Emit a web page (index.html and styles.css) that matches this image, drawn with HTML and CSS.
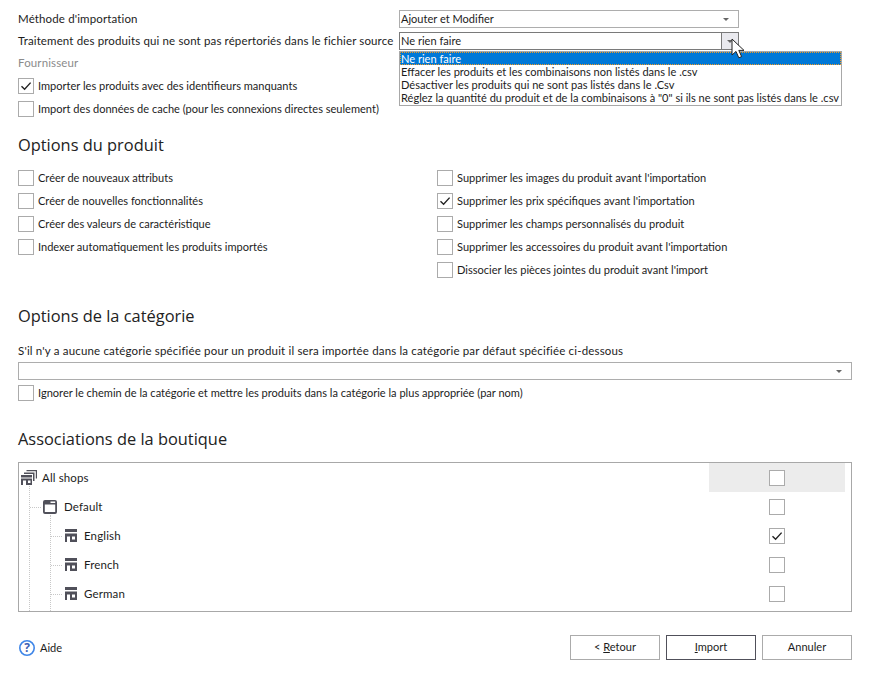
FILE: index.html
```html
<!DOCTYPE html>
<html lang="fr">
<head>
<meta charset="utf-8">
<title>Import</title>
<link rel="stylesheet" href="styles.css">
</head>
<body>
<svg class="defs" width="0" height="0" aria-hidden="true">
  <symbol id="check" viewBox="0 0 16 16"><path d="M3.500 8.200 6.600 11.200 12.600 4.600" fill="none" stroke="#222" stroke-width="1.400"/></symbol>
  <symbol id="shop" viewBox="0 0 12 13"><path fill="#50505a" fill-rule="evenodd" d="M0 0h12v3H0zM0 4.500h12V13H0zM2 7.500V13h3V7.500zM7 7.500V10.500h3V7.500z"/></symbol>
</svg>
<main class="page">
  <div class="form-row"><span class="label">Méthode d'importation</span>
    <div class="select select-top"><span>Ajouter et Modifier</span><i class="caret"></i></div></div>
  <div class="form-row row-second"><span class="label">Traitement des produits qui ne sont pas répertoriés dans le fichier source</span>
    <div class="select select-top select-open"><span>Ne rien faire</span><b class="drop-btn"><i class="caret"></i></b>
      <ul class="dropdown">
        <li class="selected">Ne rien faire</li>
        <li>Effacer les produits et les combinaisons non listés dans le .csv</li>
        <li>Désactiver les produits qui ne sont pas listés dans le .Csv</li>
        <li>Réglez la quantité du produit et de la combinaisons à "0" si ils ne sont pas listés dans le .csv</li>
      </ul>
      <svg class="cursor" width="14" height="22" viewBox="0 0 14 22"><path d="M1 1v16l4-3.600 2.800 6.400 2.800-1.200-2.800-6.200H13z" fill="#fff" stroke="#222" stroke-width="1"/></svg>
    </div></div>
  <div class="muted label">Fournisseur</div>
  <div class="checks top-checks">
    <label class="check"><span class="box"><svg><use href="#check"/></svg></span>Importer les produits avec des identifieurs manquants</label>
    <label class="check"><span class="box"></span>Import des données de cache (pour les connexions directes seulement)</label>
  </div>

  <h2 class="title title-product">Options du produit</h2>
  <div class="columns">
    <div class="checks col-left">
      <label class="check"><span class="box"></span>Créer de nouveaux attributs</label>
      <label class="check"><span class="box"></span>Créer de nouvelles fonctionnalités</label>
      <label class="check"><span class="box"></span>Créer des valeurs de caractéristique</label>
      <label class="check"><span class="box"></span>Indexer automatiquement les produits importés</label>
    </div>
    <div class="checks">
      <label class="check"><span class="box"></span>Supprimer les images du produit avant l'importation</label>
      <label class="check"><span class="box"><svg><use href="#check"/></svg></span>Supprimer les prix spécifiques avant l'importation</label>
      <label class="check"><span class="box"></span>Supprimer les champs personnalisés du produit</label>
      <label class="check"><span class="box"></span>Supprimer les accessoires du produit avant l'importation</label>
      <label class="check"><span class="box"></span>Dissocier les pièces jointes du produit avant l'import</label>
    </div>
  </div>

  <h2 class="title title-category">Options de la catégorie</h2>
  <p class="cat-label label">S'il n'y a aucune catégorie spécifiée pour un produit il sera importée dans la catégorie par défaut spécifiée ci-dessous</p>
  <div class="select select-wide"><span></span><i class="caret"></i></div>
  <label class="check check-cat"><span class="box"></span>Ignorer le chemin de la catégorie et mettre les produits dans la catégorie la plus appropriée (par nom)</label>

  <h2 class="title title-shop">Associations de la boutique</h2>
  <div class="tree">
    <div class="tree-row row-all">
      <svg class="tree-icon" width="16" height="15" viewBox="0 0 16 15"><path fill="#50505a" fill-rule="evenodd" d="M0 5h11v2.500H0zM0 8.500h11V15H0zM2 10.500V15H5v-4.500zM7 10.500V13h2.500v-2.500zM3 2.500h10.500V11H12V4H3zM5.500 0H16v8.500h-1.200V1.200H5.500z"/></svg>
      <span>All shops</span><span class="tree-cell cell-hl"><span class="box"></span></span>
    </div>
    <div class="tree-row lvl1">
      <svg class="tree-icon" width="14" height="14" viewBox="0 0 14 14"><path fill="#50505a" fill-rule="evenodd" d="M2 0h10a2 2 0 0 1 2 2v10a2 2 0 0 1-2 2H2a2 2 0 0 1-2-2V2a2 2 0 0 1 2-2zM1.800 4.500V12h10.400V4.500zM7.500 1.500v1.600h4.700V1.500z"/></svg>
      <span>Default</span><span class="tree-cell"><span class="box"></span></span>
    </div>
    <div class="tree-row lvl2">
      <svg class="tree-icon" width="12" height="13"><use href="#shop"/></svg>
      <span>English</span><span class="tree-cell"><span class="box"><svg><use href="#check"/></svg></span></span>
    </div>
    <div class="tree-row lvl2">
      <svg class="tree-icon" width="12" height="13"><use href="#shop"/></svg>
      <span>French</span><span class="tree-cell"><span class="box"></span></span>
    </div>
    <div class="tree-row lvl2">
      <svg class="tree-icon" width="12" height="13"><use href="#shop"/></svg>
      <span>German</span><span class="tree-cell"><span class="box"></span></span>
    </div>
  </div>

  <footer class="footer">
    <div class="help">
      <svg width="18" height="18" viewBox="0 0 18 18"><circle cx="9" cy="9" r="7.200" fill="none" stroke="#3f86e8" stroke-width="1.600"/><text x="9" y="13" text-anchor="middle" class="help-q">?</text></svg>
      <span>Aide</span>
    </div>
    <div class="buttons">
      <button class="btn">&lt; <u>R</u>etour</button>
      <button class="btn btn-default"><u>I</u>mport</button>
      <button class="btn">Annuler</button>
    </div>
  </footer>
</main>
</body>
</html>
```
FILE: styles.css
```css
* { box-sizing: border-box; }
html, body { margin: 0; padding: 0; background: #fff; }
body { width: 870px; height: 678px; overflow: hidden; font: 11.050px/16px Lato, "Open Sans", sans-serif; color: #1c1c1c; }
.defs { position: absolute; }
.page { padding: 10px 18px 0; }
.form-row { display: flex; align-items: center; justify-content: space-between; width: 721px; }
.row-second { margin-top: 4px; }
.label, .tree-row { font-size: 11.500px; white-space: nowrap; letter-spacing: 0.135px; }
.cat-label { letter-spacing: 0.170px; }
.select { display: flex; align-items: center; justify-content: space-between; height: 18px; border: 1px solid #adadad; padding: 0 6px 0 1px; background: #fff; }
.select-top { width: 340px; position: relative; }
.select-open { border-color: #7a7a7a; padding-right: 0; }
.select-wide { width: 834px; margin-top: 3px; }
.caret { width: 0; height: 0; border: 3.500px solid transparent; border-top: 3.500px solid #666; border-bottom: 0; display: block; margin-right: 3px; }
.drop-btn { width: 17px; height: 16px; background: #e9e9ee; border-left: 1px solid #7a7a7a; display: flex; align-items: center; justify-content: center; }
.drop-btn .caret { margin: 0; }
.dropdown { position: absolute; left: -1px; top: 18px; width: 443px; margin: 0; padding: 0 0 1px; list-style: none; background: #fff; border: 1px solid #a8a8a8; line-height: 13px; z-index: 2; }
.dropdown li { height: 13px; padding-left: 1px; white-space: nowrap; }
.dropdown .selected { background: #0078d7; color: #fff; outline: 1px dotted #f39a21; outline-offset: -1px; }
.cursor { position: absolute; left: 331px; top: 5px; z-index: 3; }
.muted { color: #8b8b8b; margin-top: 5px; height: 16px; }
.checks { display: flex; flex-direction: column; gap: 7px; }
.top-checks { margin-top: 7px; }
.check { display: flex; align-items: center; gap: 4px; height: 16px; white-space: nowrap; }
.box { flex: none; width: 16px; height: 16px; border: 1px solid #ababab; background: #fff; display: block; position: relative; }
.box svg { position: absolute; left: -1px; top: -1px; width: 16px; height: 16px; }
.title { font: 400 16.400px/22px "Open Sans", sans-serif; margin: 0; color: #222; }
.title-product { margin-top: 17px; }
.columns { display: flex; margin-top: 14px; height: 108px; }
.col-left { width: 419px; }
.title-category { margin-top: 27px; }
.cat-label { margin: 16px 0 0; height: 16px; }
.check-cat { margin-top: 5px; }
.title-shop { margin-top: 27px; }
.tree { margin-top: 12px; height: 150px; width: 834px; border: 1px solid #a8a8a8; overflow: hidden; position: relative; }
.tree-row { display: flex; align-items: center; height: 29px; position: relative; }
.row-all { padding-left: 2px; gap: 5px; }
.lvl1 { padding-left: 24px; gap: 7px; }
.lvl2 { padding-left: 46px; gap: 7px; }
.tree::before { content: ""; position: absolute; left: 10px; top: 23px; bottom: 0; border-left: 1px dotted #c8c8c8; }
.tree::after { content: ""; position: absolute; left: 31px; top: 52px; bottom: 0; border-left: 1px dotted #c8c8c8; }
.lvl1::before, .lvl2::before { content: ""; position: absolute; top: 50%; border-top: 1px dotted #c8c8c8; }
.lvl1::before { left: 11px; width: 11px; }
.lvl2::before { left: 32px; width: 11px; }
.tree-cell { position: absolute; right: 0; top: 0; bottom: 0; width: 136px; margin-right: 6px; display: flex; align-items: center; justify-content: center; }
.cell-hl { background: #ececec; }
.footer { display: flex; justify-content: space-between; align-items: center; margin-top: 23px; }
.help { display: flex; align-items: center; gap: 4px; }
.help-q { font: 700 12px "Open Sans", sans-serif; fill: #3f5fb5; }
.buttons { display: flex; gap: 6px; }
.btn { width: 90px; height: 25px; padding: 0 0 2px; border: 1px solid #ababab; background: #fff; font: inherit; color: inherit; }
.btn-default { border-color: #50505a; }
```
